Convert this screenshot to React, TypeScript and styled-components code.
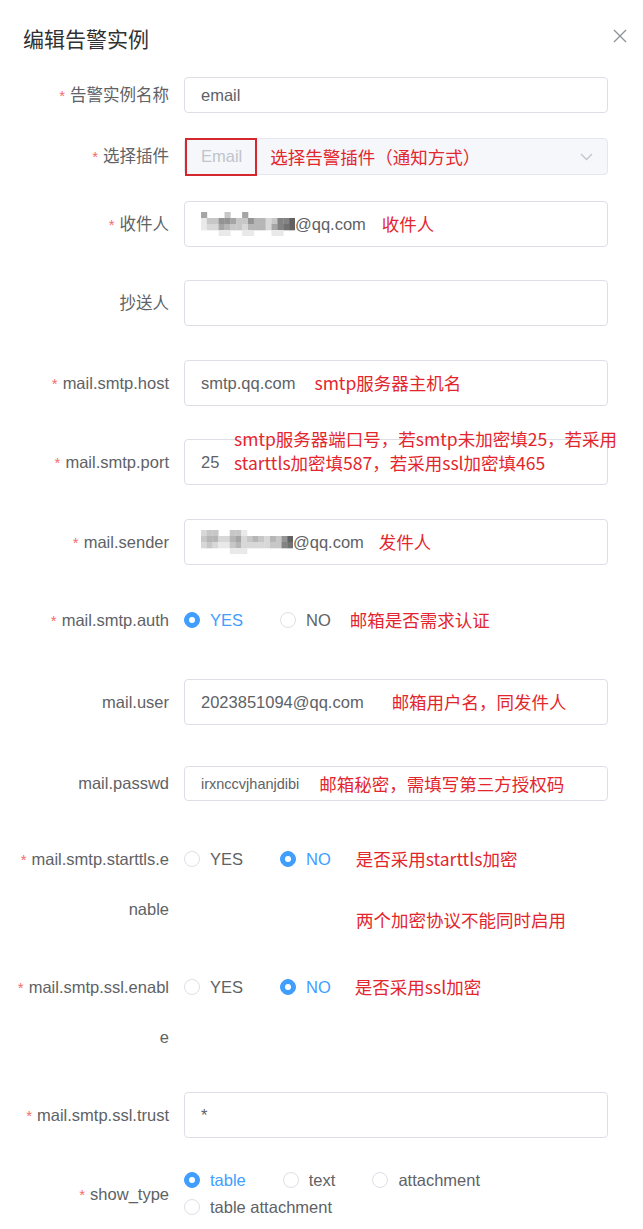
import React from "react";
import styled, { createGlobalStyle } from "styled-components";

const GlobalStyle = createGlobalStyle`
  html, body { margin: 0; padding: 0; background: #fff; }
  body {
    font-family: "Liberation Sans", Arial, "Noto Sans CJK SC", sans-serif;
    -webkit-font-smoothing: antialiased;
  }
`;

const Dialog = styled.div`
  width: 643px;
  min-height: 1229px;
  box-sizing: border-box;
  padding-top: 23px;
  background: #fff;
`;

const Header = styled.div`
  display: flex;
  align-items: center;
  justify-content: space-between;
  height: 30px;
  padding: 0 16px 0 23px;
`;

const Title = styled.h2`
  margin: 0;
  font-family: "Noto Sans CJK SC", sans-serif;
  font-size: 21px;
  font-weight: 400;
  line-height: 30px;
  color: #303133;
`;

const Close = styled.button`
  border: 0;
  padding: 0;
  background: none;
  width: 14px;
  height: 14px;
  display: flex;
  margin-top: -4px;
`;

const Form = styled.div`
  display: flex;
  flex-direction: column;
  margin-top: 24px;
`;

const Row = styled.div<{ $mt?: number; $center?: boolean }>`
  display: grid;
  grid-template-columns: 169px 424px;
  column-gap: 15px;
  margin-top: ${(p) => p.$mt ?? 0}px;
  align-items: ${(p) => (p.$center ? "center" : "start")};
`;

const Label = styled.label<{ $lh: number }>`
  text-align: right;
  font-size: 16.5px;
  line-height: ${(p) => p.$lh}px;
  color: #606266;
  white-space: nowrap;
`;

const Star = styled.span`
  color: #f56c6c;
  font-size: 15px;
  line-height: 0;
  margin-right: 5px;
`;

const Field = styled.div<{ $h: number; $disabled?: boolean; $fs?: number }>`
  position: relative;
  box-sizing: border-box;
  height: ${(p) => p.$h}px;
  border: 1px solid ${(p) => (p.$disabled ? "#e4e7ed" : "#dcdfe6")};
  background: ${(p) => (p.$disabled ? "#f5f7fa" : "#fff")};
  border-radius: 4px;
  display: flex;
  align-items: center;
  padding: 0 14px 0 16px;
  font-size: ${(p) => p.$fs ?? 16.5}px;
  color: #606266;
  white-space: nowrap;
`;

const Placeholder = styled.span`
  color: #c0c4cc;
`;

const Highlight = styled.span`
  position: absolute;
  left: 0;
  top: -1px;
  width: 72px;
  height: 38px;
  box-sizing: border-box;
  border: 2px solid #d4272e;
`;

const Chevron = styled.svg`
  margin-left: auto;
`;

const Note = styled.span<{ $ml?: number }>`
  font-family: "Noto Sans CJK SC", sans-serif;
  font-size: 17.5px;
  line-height: 24px;
  color: #e3262d;
  white-space: nowrap;
  margin-left: ${(p) => p.$ml ?? 0}px;
`;

const PortNote = styled.div`
  position: absolute;
  left: 49px;
  top: -13px;
  display: flex;
  flex-direction: column;
  font-family: "Noto Sans CJK SC", sans-serif;
  font-size: 17.5px;
  line-height: 24px;
  color: #e3262d;
  white-space: nowrap;
`;

const Content = styled.div`
  display: flex;
  flex-direction: column;
`;

const Line = styled.div<{ $h: number; $gap: number }>`
  display: flex;
  align-items: center;
  height: ${(p) => p.$h}px;
  gap: ${(p) => p.$gap}px;
`;

const RadioGroup = styled.div`
  display: flex;
  flex-wrap: wrap;
  align-items: center;
  column-gap: 37px;
  row-gap: 7px;
`;

const RadioItem = styled.span<{ $checked?: boolean }>`
  display: inline-flex;
  align-items: center;
  font-size: 16.5px;
  line-height: 20px;
  color: ${(p) => (p.$checked ? "#409eff" : "#606266")};
`;

const Dot = styled.span<{ $checked?: boolean }>`
  box-sizing: border-box;
  width: 16px;
  height: 16px;
  border-radius: 50%;
  border: 1px solid ${(p) => (p.$checked ? "#409eff" : "#dcdfe6")};
  background: ${(p) => (p.$checked ? "#409eff" : "#fff")};
  margin-right: 10px;
  display: inline-flex;
  align-items: center;
  justify-content: center;
  &::after {
    content: "";
    width: 6px;
    height: 6px;
    border-radius: 50%;
    background: #fff;
    display: ${(p) => (p.$checked ? "block" : "none")};
  }
`;

const SubNote = styled.div`
  margin-top: 24px;
  padding-left: 172px;
  display: flex;
`;

const MosaicSvg = styled.svg`
  display: block;
  flex: none;
`;

const Mosaic = ({ rows, width }: { rows: string[]; width: number }) => {
  const cols = rows[0].length;
  const cw = width / cols;
  const ch = 6;
  return (
    <MosaicSvg width={width} height={rows.length * ch} viewBox={`0 0 ${width} ${rows.length * ch}`}>
      {rows.map((r, y) =>
        r.split("").map((c, x) => {
          const d = parseInt(c, 10);
          if (!d) return null;
          const v = 250 - d * 17;
          return (
            <rect
              key={`${x}-${y}`}
              x={x * cw}
              y={y * ch}
              width={cw + 0.3}
              height={ch + 0.3}
              fill={`rgb(${v},${v},${v})`}
            />
          );
        })
      )}
    </MosaicSvg>
  );
};

const Radio = ({ checked, children }: { checked?: boolean; children: React.ReactNode }) => (
  <RadioItem $checked={checked}>
    <Dot $checked={checked} />
    {children}
  </RadioItem>
);

const Req = ({ children }: { children: React.ReactNode }) => (
  <>
    <Star>*</Star>
    {children}
  </>
);

export default function App() {
  return (
    <>
      <GlobalStyle />
      <Dialog>
        <Header>
          <Title>编辑告警实例</Title>
          <Close aria-label="close">
            <svg width="14" height="14" viewBox="0 0 14 14">
              <path d="M1 1L13 13M13 1L1 13" stroke="#909399" strokeWidth="1.4" fill="none" />
            </svg>
          </Close>
        </Header>

        <Form>
          <Row>
            <Label $lh={36}><Req>告警实例名称</Req></Label>
            <Field $h={36}>email</Field>
          </Row>

          <Row $mt={25}>
            <Label $lh={37}><Req>选择插件</Req></Label>
            <Field $h={37} $disabled>
              <Highlight />
              <Placeholder>Email</Placeholder>
              <Note $ml={28}>选择告警插件（通知方式）</Note>
              <Chevron width="13" height="8" viewBox="0 0 13 8">
                <path d="M1 1L6.5 6.5L12 1" stroke="#c0c4cc" strokeWidth="1.3" fill="none" />
              </Chevron>
            </Field>
          </Row>

          <Row $mt={26}>
            <Label $lh={46}><Req>收件人</Req></Label>
            <Field $h={46}>
              <Mosaic
                width={94}
                rows={["5000300500000000", "1336653364423779", "1225433244425789", "0001100110001100"]}
              />
              @qq.com
              <Note $ml={16}>收件人</Note>
            </Field>
          </Row>

          <Row $mt={33}>
            <Label $lh={46}>抄送人</Label>
            <Field $h={46} />
          </Row>

          <Row $mt={34}>
            <Label $lh={46}><Req>mail.smtp.host</Req></Label>
            <Field $h={46}>
              smtp.qq.com
              <Note $ml={19}>smtp服务器主机名</Note>
            </Field>
          </Row>

          <Row $mt={33}>
            <Label $lh={46}><Req>mail.smtp.port</Req></Label>
            <Field $h={46}>
              25
              <PortNote>
                <span>smtp服务器端口号，若smtp未加密填25，若采用</span>
                <span>starttls加密填587，若采用ssl加密填465</span>
              </PortNote>
            </Field>
          </Row>

          <Row $mt={34}>
            <Label $lh={46}><Req>mail.sender</Req></Label>
            <Field $h={46}>
              <Mosaic
                width={92}
                rows={["2330033100000000", "3442245234324369", "2321134222223378", "0000011100000000"]}
              />
              @qq.com
              <Note $ml={15}>发件人</Note>
            </Field>
          </Row>

          <Row $mt={32}>
            <Label $lh={46}><Req>mail.smtp.auth</Req></Label>
            <Line $h={46} $gap={19}>
              <RadioGroup>
                <Radio checked>YES</Radio>
                <Radio>NO</Radio>
              </RadioGroup>
              <Note>邮箱是否需求认证</Note>
            </Line>
          </Row>

          <Row $mt={36}>
            <Label $lh={46}>mail.user</Label>
            <Field $h={46}>
              2023851094@qq.com
              <Note $ml={28}>邮箱用户名，同发件人</Note>
            </Field>
          </Row>

          <Row $mt={41}>
            <Label $lh={35}>mail.passwd</Label>
            <Field $h={35} $fs={14.5}>
              irxnccvjhanjdibi
              <Note $ml={20}>邮箱秘密，需填写第三方授权码</Note>
            </Field>
          </Row>

          <Row $mt={33}>
            <Label $lh={50}>
              <Req>mail.smtp.starttls.e</Req>
              <br />
              nable
            </Label>
            <Content>
              <Line $h={50} $gap={25}>
                <RadioGroup>
                  <Radio>YES</Radio>
                  <Radio checked>NO</Radio>
                </RadioGroup>
                <Note>是否采用starttls加密</Note>
              </Line>
              <SubNote>
                <Note>两个加密协议不能同时启用</Note>
              </SubNote>
            </Content>
          </Row>

          <Row $mt={28}>
            <Label $lh={50}>
              <Req>mail.smtp.ssl.enabl</Req>
              <br />
              e
            </Label>
            <Line $h={50} $gap={24}>
              <RadioGroup>
                <Radio>YES</Radio>
                <Radio checked>NO</Radio>
              </RadioGroup>
              <Note>是否采用ssl加密</Note>
            </Line>
          </Row>

          <Row $mt={30}>
            <Label $lh={46}><Req>mail.smtp.ssl.trust</Req></Label>
            <Field $h={46}>*</Field>
          </Row>

          <Row $mt={32} $center>
            <Label $lh={46}><Req>show_type</Req></Label>
            <RadioGroup>
              <Radio checked>table</Radio>
              <Radio>text</Radio>
              <Radio>attachment</Radio>
              <Radio>table attachment</Radio>
            </RadioGroup>
          </Row>
        </Form>
      </Dialog>
    </>
  );
}
